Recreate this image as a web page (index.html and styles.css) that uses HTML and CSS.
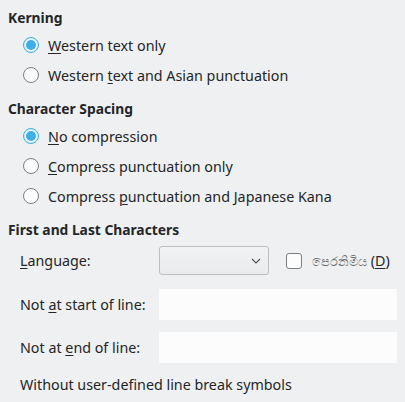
FILE: index.html
```html
<!DOCTYPE html>
<html>
<head>
<meta charset="utf-8">
<link rel="stylesheet" href="styles.css">
</head>
<body>
<div class="page">
  <div class="heading h1">Kerning</div>
  <div class="radio-row"><span class="radio checked"></span><span class="label"><u>W</u>estern text only</span></div>
  <div class="radio-row"><span class="radio"></span><span class="label">Western <u>t</u>ext and Asian punctuation</span></div>

  <div class="heading h2">Character Spacing</div>
  <div class="radio-row"><span class="radio checked"></span><span class="label"><u>N</u>o compression</span></div>
  <div class="radio-row"><span class="radio"></span><span class="label"><u>C</u>ompress punctuation only</span></div>
  <div class="radio-row"><span class="radio"></span><span class="label">Compress <u>p</u>unctuation and Japanese Kana</span></div>

  <div class="heading h3">First and Last Characters</div>
  <div class="form-row lang-row">
    <span class="flabel"><u>L</u>anguage:</span>
    <div class="combo">
      <svg class="chev" width="10" height="6" viewBox="0 0 10 6"><path d="M1 1 L5 5 L9 1" fill="none" stroke="#4d4d4d" stroke-width="1.1"/></svg>
    </div>
    <span class="checkbox"></span>
    <span class="cblabel"><span class="sinh">පෙරනිමිය</span> (<u>D</u>)</span>
  </div>
  <div class="form-row input-row first-input">
    <span class="flabel">Not <u>a</u>t start of line:</span>
    <div class="field"></div>
  </div>
  <div class="form-row input-row second-input">
    <span class="flabel">Not at <u>e</u>nd of line:</span>
    <div class="field"></div>
  </div>
  <div class="note">Without user-defined line break symbols</div>
</div>
</body>
</html>
```
FILE: styles.css
```css
html, body {
  margin: 0;
  padding: 0;
  background: #eff0f1;
}
body {
  font-family: "Noto Sans", "DejaVu Sans", sans-serif;
  font-size: 14.3px;
  color: #232629;
}
.page {
  width: 405px;
  height: 402px;
  display: flex;
  flex-direction: column;
  padding-left: 8px;
  box-sizing: border-box;
}
u {
  text-decoration: underline;
  text-underline-offset: 2px;
  text-decoration-thickness: 1px;
}
.heading {
  font-weight: bold;
  font-size: 13.8px;
  height: 24px;
  line-height: 24px;
}
.h1 { margin-top: 6px; }
.h2 { margin-top: 7px; }
.h3 { margin-top: 7px; }
.radio-row {
  height: 30px;
  display: flex;
  align-items: center;
  padding-left: 15px;
}
.radio {
  width: 16px;
  height: 16px;
  box-sizing: border-box;
  border-radius: 50%;
  border: 1px solid #7c7e80;
  background: #fcfcfc;
  margin-right: 9px;
  flex: none;
  position: relative;
}
.radio.checked {
  border-color: #3daee9;
  background: #d9eefa;
}
.radio.checked::after {
  content: "";
  position: absolute;
  left: 2px;
  top: 2px;
  width: 10px;
  height: 10px;
  border-radius: 50%;
  background: #3daee9;
  box-shadow: 0 0 0 1px #fcfcfc;
}
.form-row {
  display: flex;
  align-items: center;
  padding-left: 12px;
}
.flabel {
  width: 139px;
  flex: none;
}
.lang-row {
  margin-top: 4px;
  height: 29px;
}
.combo {
  width: 110px;
  height: 29px;
  box-sizing: border-box;
  border: 1px solid #bcbebf;
  border-radius: 3px;
  background: linear-gradient(#f1f2f3, #eaebec);
  display: flex;
  align-items: center;
  justify-content: flex-end;
  padding-right: 7px;
  flex: none;
}
.checkbox {
  width: 16px;
  height: 16px;
  box-sizing: border-box;
  border: 1px solid #7c7e80;
  border-radius: 3px;
  background: #fcfcfc;
  margin-left: 17px;
  margin-right: 10px;
  flex: none;
}
.cblabel {
  white-space: nowrap;
}
.sinh {
  color: #6b6d70;
  font-size: 12.5px;
}
.input-row {
  height: 31px;
}
.first-input { margin-top: 14px; }
.second-input { margin-top: 12px; }
.field {
  width: 238px;
  height: 31px;
  background: #fcfcfc;
  flex: none;
}
.note {
  margin-top: 12px;
  padding-left: 12px;
  height: 20px;
  line-height: 20px;
}
```
